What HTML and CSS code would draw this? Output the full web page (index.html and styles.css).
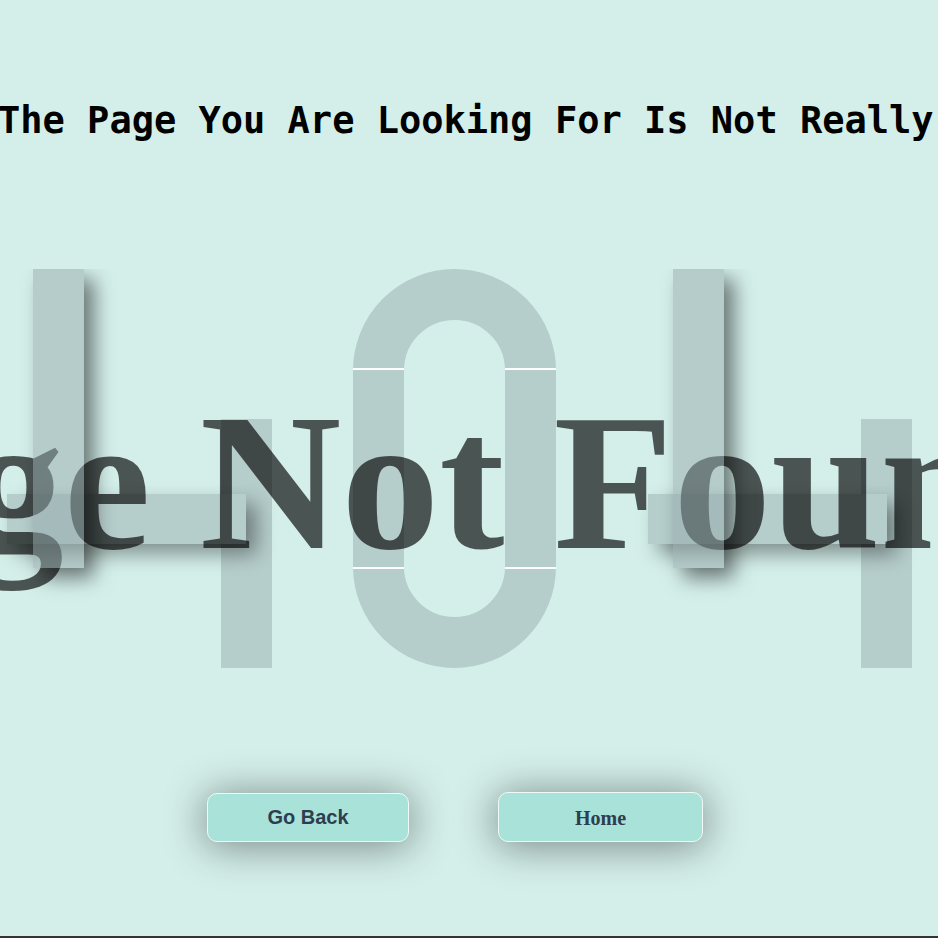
FILE: index.html
```html
<!DOCTYPE html>
<html lang="en">
<head>
<meta charset="utf-8">
<title>Page Not Found</title>
<link rel="stylesheet" href="styles.css">
</head>
<body>
<div class="page">
  <h1 class="headline">The Page You Are Looking For Is Not Really Here</h1>
  <div class="stage">
    <div class="bar bar-h bar-h-left"></div>
    <div class="bar bar-low bar-low-left"></div>
    <div class="bar bar-top bar-top-left"></div>
    <svg class="zero" width="203" height="399" viewBox="0 0 203 399" aria-hidden="true">
      <rect x="25.5" y="25.5" width="152" height="348" rx="76" ry="76" fill="none" stroke="#b5cdcb" stroke-width="51"/>
      <rect x="0" y="99" width="51" height="2" fill="#ffffff"/>
      <rect x="152" y="99" width="51" height="2" fill="#ffffff"/>
      <rect x="0" y="298" width="51" height="2" fill="#ffffff"/>
      <rect x="152" y="298" width="51" height="2" fill="#ffffff"/>
    </svg>
    <div class="bar bar-h bar-h-right"></div>
    <div class="bar bar-low bar-low-right"></div>
    <div class="bar bar-top bar-top-right"></div>
    <h2 class="title">Page Not Found</h2>
  </div>
  <div class="actions">
    <button class="btn btn-back" type="button">Go Back</button>
    <button class="btn btn-home" type="button">Home</button>
  </div>
  <div class="rule"></div>
</div>
</body>
</html>
```
FILE: styles.css
```css
html, body {
  margin: 0;
  height: 100%;
  overflow: hidden;
}

body {
  background: #d4efea;
}

.page {
  display: flex;
  flex-direction: column;
  height: 100vh;
}

.headline {
  margin: 99px 0 0 -2px;
  font: bold 37px/44px "DejaVu Sans Mono", monospace;
  color: #000;
  white-space: nowrap;
  overflow: hidden;
  flex: none;
}

.stage {
  position: relative;
  flex: none;
  height: 400px;
  margin-top: 126px;
  overflow: hidden;
}

.bar {
  position: absolute;
}

.bar-h {
  top: 225px;
  width: 239px;
  height: 50px;
  background: #b5cdcb;
  box-shadow: 10px 10px 20px rgba(0, 0, 0, 0.4);
  z-index: 2;
}

.bar-h-left { left: 7px; }
.bar-h-right { left: 648px; }

.bar-low {
  top: 150px;
  width: 51px;
  height: 249px;
  background: #b5cdcb;
  z-index: 1;
}

.bar-low-left { left: 221px; }
.bar-low-right { left: 861px; }

.bar-top {
  top: 0;
  width: 51px;
  height: 299px;
  background: rgba(149, 170, 171, 0.5);
  box-shadow: 10px 10px 20px rgba(0, 0, 0, 0.5);
  z-index: 4;
}

.bar-top-left { left: 33px; }
.bar-top-right { left: 673px; }

.zero {
  position: absolute;
  left: 353px;
  top: 0;
  z-index: 1;
}

.title {
  position: absolute;
  left: -252px;
  top: 115px;
  margin: 0;
  font: bold 196px/196px "Liberation Serif", "Times New Roman", serif;
  color: rgba(0, 0, 0, 0.65);
  white-space: nowrap;
  z-index: 3;
}

.actions {
  display: flex;
  align-items: flex-start;
  gap: 89px;
  margin-top: 124px;
  padding-left: 207px;
  flex: none;
}

.btn {
  height: 49px;
  padding: 0;
  border: 1px solid #eefaf7;
  border-radius: 10px;
  background: #a8e2d8;
  color: #2c3e50;
  box-shadow: 0 3px 40px 2px rgba(0, 0, 0, 0.42);
  cursor: pointer;
}

.btn-back {
  width: 202px;
  font: bold 20px "Liberation Sans", Arial, sans-serif;
}

.btn-home {
  width: 205px;
  height: 50px;
  margin-top: -1px;
  padding-top: 3px;
  font: bold 20px "Liberation Serif", "Times New Roman", serif;
}

.rule {
  margin-top: auto;
  height: 2px;
  background: #333;
  flex: none;
}
```
